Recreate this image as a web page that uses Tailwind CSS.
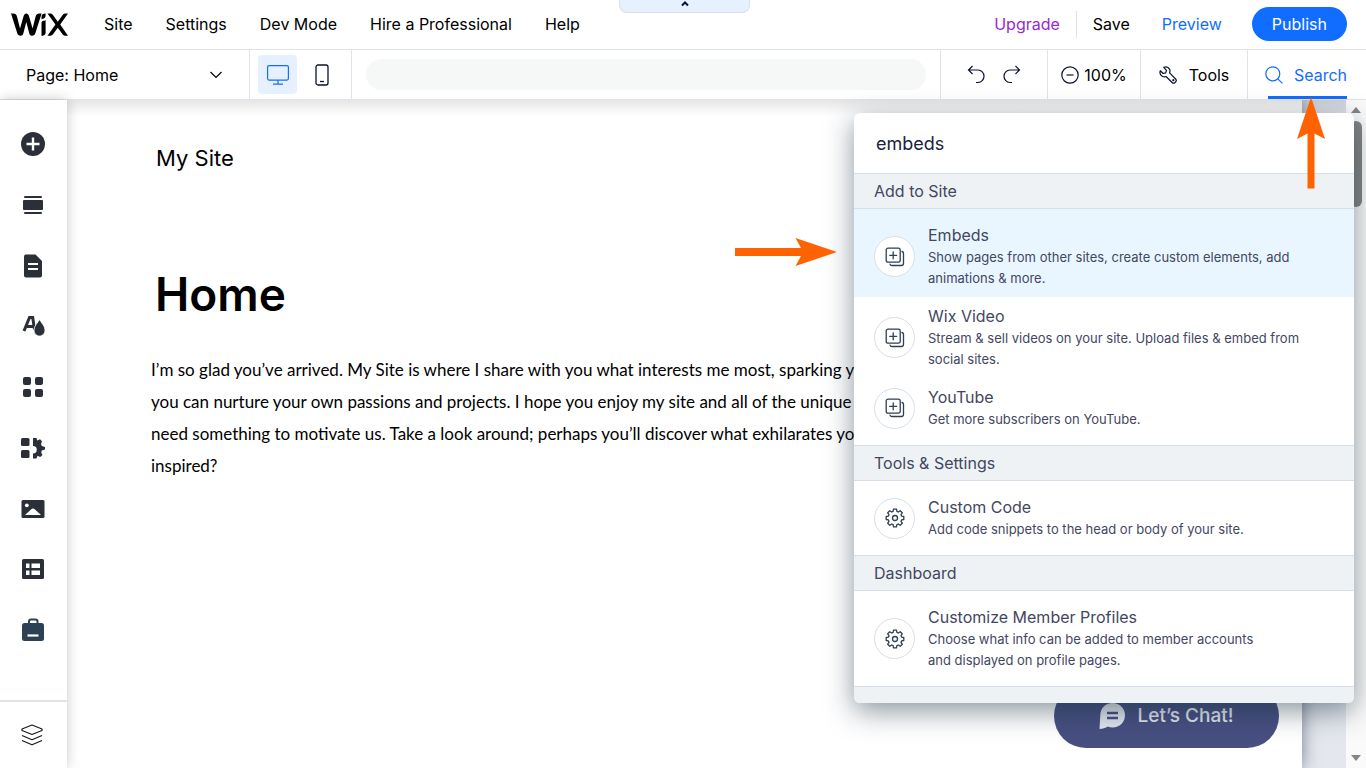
<!DOCTYPE html>
<html lang="en">
<head>
    <meta charset="UTF-8">
    <meta name="viewport" content="width=device-width, initial-scale=1.0">
    <title>Wix Editor</title>
    <script src="https://cdn.jsdelivr.net/npm/@tailwindcss/browser@4"></script>
</head>
<body class="h-screen overflow-hidden flex flex-col bg-white text-[#0b1230] text-base font-['Inter',sans-serif]">
    <!-- Shared icons -->
    <svg class="hidden">
        <symbol id="icon-add" viewBox="0 0 20 20" fill="none" stroke="currentColor" stroke-width="1.3" stroke-linecap="round">
            <rect x="1.2" y="1.2" width="14" height="14" rx="1.8"/>
            <path d="M8.2 4.8v7M4.7 8.3h7M17 4.5c.9.2 1.5.8 1.5 1.8v10c0 1.3-.8 2.2-2.200 2.200H7c-1 0-1.700-.5-2-1.400"/>
        </symbol>
        <symbol id="icon-gear" viewBox="0 0 20 20" fill="none" stroke="currentColor" stroke-width="1.3" stroke-linejoin="round">
            <path d="M8.500 1.200h3l.4 2.200 1.400.6 1.900-1.300 2.100 2.100-1.300 1.900.6 1.400 2.200.4v3l-2.200.4-.6 1.400 1.300 1.900-2.100 2.100-1.900-1.300-1.400.6-.4 2.200h-3l-.4-2.200-1.400-.6-1.900 1.300-2.100-2.100L4 13.300l-.6-1.400-2.200-.4v-3l2.200-.4L4 6.700 2.700 4.800l2.100-2.100L6.700 4l1.400-.6z"/>
            <circle cx="10" cy="10" r="2.500"/>
        </symbol>
    </svg>

    <!-- Top bar -->
    <header class="relative h-[50px] shrink-0 flex items-center justify-between border-b border-[#dfe3eb] pl-[11px] pr-[19px] pb-px">
        <div class="flex items-center">
            <a href="#" aria-label="Wix" class="mr-9">
                <svg class="w-[57px] h-[23px] text-black" viewBox="0 0 57 23" fill="currentColor">
                    <path d="M0 .5h2.200c2 0 3.300 1 3.800 3L9 15.500l3.200-11C12.800 2 13.800 .5 15.300 .5s2.500 1.500 3.100 4l3.200 11 3-12c.5-2 1.800-3 3.800-3h2.200L24.400 20c-.5 2-1.500 2.700-3.600 2.700-1.300 0-2-.7-2.500-2.200L15.300 9l-3 11.500c-.5 1.500-1.200 2.200-2.500 2.200-2.100 0-3.100-.7-3.600-2.700z"/>
                    <path d="M34.600 7v12c0 2.700-.9 3.700-4.100 3.700V10c0-1.800 1.400-2.300 2.600-2.300.7 0 1.200-.2 1.500-.7z"/>
                    <path d="M34.600.5v2c0 2-1.200 3-2.800 3.300-.8.200-1.300.6-1.300.6V4.200C30.500 1.500 32 .5 34.600.5z"/>
                    <path d="M36.500.5h2.200c1.700 0 2.700.6 3.600 2l4.500 6.300 4.500-6.300c.9-1.400 1.900-2 3.600-2H57l-7.800 11L57 22.700h-2.200c-1.700 0-2.700-.6-3.600-2l-4.400-6-4.400 6c-.9 1.400-1.900 2-3.600 2h-2.300l7.900-11.200z"/>
                </svg>
            </a>
            <nav class="flex gap-[33px] text-black">
                <a href="#">Site</a>
                <a href="#">Settings</a>
                <a href="#">Dev Mode</a>
                <a href="#">Hire a Professional</a>
                <a href="#">Help</a>
            </nav>
        </div>
        <div class="flex items-center">
            <a href="#" class="text-[#9a27d5]">Upgrade</a>
            <span class="mx-4 w-px h-[27px] bg-[#dfe3eb]"></span>
            <button type="button" class="text-black">Save</button>
            <button type="button" class="ml-8 text-[#116dff]">Preview</button>
            <button type="button" class="ml-[30px] h-[34px] px-5 rounded-full bg-[#116dff] text-white">Publish</button>
        </div>
        <button type="button" aria-label="Collapse top bar" class="absolute top-0 inset-x-0 ml-auto mr-[616px] w-[131px] h-[13px] flex justify-center rounded-b-lg border border-t-0 border-[#d5dfef] bg-[#e7f0ff]">
            <svg class="w-2 h-2" viewBox="0 0 8 8" fill="none" stroke="currentColor" stroke-width="2"><path d="M1 5.500l3-3 3 3"/></svg>
        </button>
    </header>

    <!-- Toolbar -->
    <div class="h-[50px] shrink-0 flex border-b border-[#dfe3eb] divide-x divide-[#dfe3eb] text-black">
        <button type="button" class="w-[250px] shrink-0 flex items-center justify-between pl-[26px] pr-[27px]">
            Page: Home
            <svg class="w-3 h-2" viewBox="0 0 12 8" fill="none" stroke="currentColor" stroke-width="1.200"><path d="M.5 1L6 6.500 11.500 1"/></svg>
        </button>
        <div class="w-[102px] shrink-0 flex items-center gap-[5px] pl-2">
            <button type="button" aria-label="Desktop" class="w-[39px] h-[39px] flex items-center justify-center rounded bg-[#e7f0ff] text-[#116dff]">
                <svg class="w-[22px] h-5" viewBox="0 0 22 20" fill="none" stroke="currentColor" stroke-width="1.200"><rect x=".6" y=".6" width="20.800" height="14.500" rx="1.500"/><path d="M11 15v4M6 19.200h10"/></svg>
            </button>
            <button type="button" aria-label="Mobile" class="w-[39px] h-[39px] flex items-center justify-center text-[#0b1230]">
                <svg class="w-[14px] h-[22px]" viewBox="0 0 14 22" fill="none" stroke="currentColor" stroke-width="1.300"><rect x="1" y="1" width="12" height="20" rx="2"/><path d="M5 17.500h4"/></svg>
            </button>
        </div>
        <div class="flex-1 flex items-center px-[14px]">
            <div class="flex-1 h-[31px] rounded-full bg-[#f6f8f8]"></div>
        </div>
        <div class="w-[107px] shrink-0 flex items-center justify-center gap-[18px] text-[#0b1230]">
            <button type="button" aria-label="Undo">
                <svg class="w-[18px] h-[19px]" viewBox="0 0 18 19" fill="none" stroke="currentColor" stroke-width="1.200"><path d="M5.500 1L1.500 5l4 4M1.500 5H11c3.400 0 6 2.800 6 6.200s-2.600 6.300-6 6.300H9"/></svg>
            </button>
            <button type="button" aria-label="Redo">
                <svg class="w-[18px] h-[19px]" viewBox="0 0 18 19" fill="none" stroke="currentColor" stroke-width="1.200"><path d="M12.500 1l4 4-4 4M16.500 5H7c-3.400 0-6 2.800-6 6.200s2.600 6.300 6 6.300h2"/></svg>
            </button>
        </div>
        <button type="button" class="w-[93px] shrink-0 flex items-center justify-center gap-[5px]">
            <svg class="w-[18px] h-[18px] shrink-0 text-[#0b1230]" viewBox="0 0 18 18" fill="none" stroke="currentColor" stroke-width="1.200"><circle cx="9" cy="9" r="8.200"/><path d="M5.500 9h7"/></svg>
            100%
        </button>
        <button type="button" class="w-[107px] shrink-0 flex items-center justify-center gap-3">
            <svg class="w-[18px] h-[18px] shrink-0 text-[#0b1230]" viewBox="0 0 18 18" fill="none" stroke="currentColor" stroke-width="1.200" stroke-linejoin="round"><path d="M4.800 1.300c2.200-.9 4.600-.2 5.700 1.800.6 1.200.6 2.500.1 3.700l6 6.200c.8.900.8 2.100 0 2.900l-.6.600c-.8.800-2.100.8-2.900 0L7 10.500c-1.200.5-2.600.4-3.800-.3C1.300 9.100.6 6.900 1.300 4.800l2.900 2.700 2.500-.6.700-2.600z"/><circle cx="14.300" cy="14.200" r=".5"/></svg>
            Tools
        </button>
        <div class="w-[118px] shrink-0 flex pl-[17px] pr-[19px]">
            <button type="button" class="relative flex-1 flex items-center justify-between text-[#116dff] after:absolute after:left-[3px] after:right-0 after:bottom-0 after:h-[3px] after:bg-[#116dff]">
                <svg class="w-[18px] h-[18px] shrink-0" viewBox="0 0 18 18" fill="none" stroke="currentColor" stroke-width="1.200"><circle cx="7.800" cy="7.800" r="7"/><path d="M12.800 12.800l4.600 4.600"/></svg>
                Search
            </button>
        </div>
    </div>

    <div class="flex-1 min-h-0 flex">
        <!-- Left sidebar -->
        <aside class="relative z-10 w-[67px] shrink-0 flex flex-col bg-white shadow-[0_0_12px_rgba(0,0,0,0.22)] text-[#2b2f38]">
            <div class="flex-1 flex flex-col items-center justify-between pt-8 pb-[58px] pr-[2px]">
                <button type="button" aria-label="Add elements">
                    <svg class="w-6 h-6" viewBox="0 0 24 24"><circle cx="12" cy="12" r="12" fill="currentColor"/><path d="M12 5.500v13M5.500 12h13" stroke="#fff" stroke-width="2.400"/></svg>
                </button>
                <button type="button" aria-label="Sections">
                    <svg class="w-6 h-6" viewBox="0 0 24 24" fill="currentColor"><rect x="3" y="3" width="18" height="2" rx="1"/><rect x="2" y="7" width="20" height="10" rx="1"/><rect x="3" y="19" width="18" height="2" rx="1"/></svg>
                </button>
                <button type="button" aria-label="Pages">
                    <svg class="w-6 h-6" viewBox="0 0 24 24"><path d="M5 .5h9.500L21 7v14.500c0 1.100-.9 2-2 2H5c-1.100 0-2-.9-2-2v-19c0-1.100.9-2 2-2z" fill="currentColor"/><path d="M7 10h10M7 15h10" stroke="#fff" stroke-width="2.200"/></svg>
                </button>
                <button type="button" aria-label="Site design">
                    <svg class="w-6 h-6" viewBox="0 0 24 24"><path d="M3 17L8.500 3.500h3.200l1.800 12M5.500 12.500h7" fill="none" stroke="currentColor" stroke-width="3"/><path d="M18.500 5.500c1.800 3.300 5.500 6.500 5.500 10.500 0 3.700-2.500 6-5.500 6S13 19.700 13 16c0-4 3.700-7.200 5.500-10.500z" fill="currentColor" stroke="#fff" stroke-width=".8"/></svg>
                </button>
                <button type="button" aria-label="App market">
                    <svg class="w-6 h-6" viewBox="0 0 24 24" fill="currentColor"><rect x="2" y="2" width="8" height="8" rx="2"/><rect x="14" y="2" width="8" height="8" rx="2"/><rect x="2" y="14" width="8" height="8" rx="2"/><rect x="14" y="14" width="8" height="8" rx="2"/></svg>
                </button>
                <button type="button" aria-label="My business">
                    <svg class="w-6 h-6" viewBox="0 0 24 24" fill="currentColor"><rect x="0" y="2" width="8.500" height="8" rx="1.500"/><rect x="0" y="14" width="8.500" height="8" rx="1.500"/><path d="M12 2h3.500l.8 2.500 2.700-1.300 2 2-1 2.800.8 2L24 11v2.500l-3.200 1-.6 2 1.300 2.500-2.300 2-2.700-1.200-1 2.700H12v-5a3.700 3.700 0 000-7.500z"/></svg>
                </button>
                <button type="button" aria-label="Media">
                    <svg class="w-6 h-6" viewBox="0 0 24 24"><rect x="0.500" y="3" width="23" height="18" rx="1.500" fill="currentColor"/><circle cx="5.800" cy="8.300" r="1.900" fill="#fff"/><path d="M4 18l6-5.500c1.300-1.200 2.700-1.200 4 0l6 5.500z" fill="#fff"/></svg>
                </button>
                <button type="button" aria-label="Content manager">
                    <svg class="w-6 h-6" viewBox="0 0 24 24"><rect x="1" y="2" width="22" height="20" rx="1.500" fill="currentColor"/><path d="M5 6.500h3.500V11H5zM10.500 6.500h8.500V11h-8.500zM5 13.500h3.500V18H5zM10.500 13.500h8.500V18h-8.500z" fill="#fff"/></svg>
                </button>
                <button type="button" aria-label="Ascend" class="text-[#2d4154]">
                    <svg class="w-6 h-6" viewBox="0 0 24 24"><path d="M8 6V3.500C8 2.200 8.700 1.500 10 1.500h4.500c1.300 0 2 .7 2 2V6" fill="none" stroke="currentColor" stroke-width="2"/><rect x="1" y="5" width="22" height="18" rx="2.500" fill="currentColor"/><path d="M6.500 17.500h11" stroke="#fff" stroke-width="2.200"/></svg>
                </button>
            </div>
            <button type="button" aria-label="Layers" class="h-[68px] flex items-center justify-center border-t-2 border-[#dfe3eb] pr-[3px] text-[#16181d]">
                <svg class="w-[22px] h-[22px]" viewBox="0 0 22 22" fill="none" stroke="currentColor" stroke-width="1.200" stroke-linejoin="round"><path d="M11 1L21 5v1.500L11 10.500 1 6.500V5zM1 11.500l10 4.200 10-4.200M1 16.500l10 4.300 10-4.300"/></svg>
            </button>
        </aside>

        <!-- Site canvas -->
        <div class="relative flex-1 min-w-0 flex bg-[#e4e7ee] overflow-hidden">
            <main class="relative flex-1 mr-[44px] bg-white pl-[84px] pt-11 text-black whitespace-nowrap shadow-[0_0_16px_rgba(30,40,60,0.55)]">
                <p class="pl-[5px] text-[22px] leading-7">My Site</p>
                <h1 class="mt-[92px] pl-1 text-[46px] leading-[60px] font-semibold">Home</h1>
                <p class="mt-[30px] text-[17px] leading-8 font-['Lato',sans-serif]">
                    I’m so glad you’ve arrived. My Site is where I share with you what interests me most, sparking your<br>
                    you can nurture your own passions and projects. I hope you enjoy my site and all of the unique content<br>
                    need something to motivate us. Take a look around; perhaps you’ll discover what exhilarates you<br>
                    inspired?
                </p>
                <button type="button" class="absolute right-[23px] bottom-5 w-[225px] h-16 flex items-center justify-center gap-3 rounded-full bg-[#474f80] text-[#e3e7ee] text-[19px] font-medium">
                    <svg class="w-[26px] h-[26px]" viewBox="0 0 26 26"><path d="M13.500 0C20.500 0 26 5.300 26 12.300S20.500 24.500 13.500 24.500c-1.700 0-3.200-.3-4.600-.9C6.500 25.300 3.500 26 .5 26l.8-13.700C1.300 5.300 6.500 0 13.500 0z" fill="currentColor"/><path d="M8 10h11M8 15h11" stroke="#474f80" stroke-width="2.400"/></svg>
                    Let’s Chat!
                </button>
            </main>
            <div class="absolute inset-x-0 top-0 h-4 bg-linear-to-b from-black/10 to-transparent"></div>
        </div>

        <!-- Scrollbar -->
        <div class="w-5 shrink-0 flex flex-col items-center justify-between bg-[#fafafa] pt-[7px] pb-[7px] text-[#858585]">
            <div class="flex flex-col items-center gap-2">
                <svg class="w-[10px] h-[6px]" viewBox="0 0 10 6" fill="currentColor"><path d="M5 0l5 6H0z"/></svg>
                <div class="w-3 h-[86px] rounded-full bg-[#858585]"></div>
            </div>
            <svg class="w-[10px] h-[6px]" viewBox="0 0 10 6" fill="currentColor"><path d="M0 0h10L5 6z"/></svg>
        </div>
    </div>

    <!-- Search results -->
    <section class="absolute z-20 right-3 top-[113px] w-[500px] h-[590px] flex flex-col rounded-md overflow-hidden bg-white text-[#43475f] shadow-[0_8px_28px_rgba(22,45,61,0.5)]">
        <input type="text" aria-label="Search" value="embeds" class="h-[60px] shrink-0 px-[22px] text-[18px] text-[#1b2140] outline-none">
        <h2 class="h-9 shrink-0 flex items-center border-y border-[#d6dfe8] bg-[#eef2f5] px-5 pb-px">Add to Site</h2>
        <ul>
            <li>
                <a href="#" class="flex items-center gap-[13px] px-5 pt-[15px] pb-2 bg-[#e9f6ff]">
                    <span class="size-[41px] shrink-0 flex items-center justify-center rounded-full border border-[#d6dfe8] bg-white text-[#2d3f50]"><svg class="size-5"><use href="#icon-add"/></svg></span>
                    <span>
                        <span class="block leading-[23px]">Embeds</span>
                        <span class="block text-[13px] leading-[21px]">Show pages from other sites, create custom elements, add<br>animations &amp; more.</span>
                    </span>
                </a>
            </li>
            <li>
                <a href="#" class="flex items-center gap-[13px] px-5 py-2">
                    <span class="size-[41px] shrink-0 flex items-center justify-center rounded-full border border-[#d6dfe8] bg-white text-[#2d3f50]"><svg class="size-5"><use href="#icon-add"/></svg></span>
                    <span>
                        <span class="block leading-[23px]">Wix Video</span>
                        <span class="block text-[13px] leading-[21px]">Stream &amp; sell videos on your site. Upload files &amp; embed from<br>social sites.</span>
                    </span>
                </a>
            </li>
            <li>
                <a href="#" class="flex items-center gap-[13px] px-5 pt-2 pb-[15px]">
                    <span class="size-[41px] shrink-0 flex items-center justify-center rounded-full border border-[#d6dfe8] bg-white text-[#2d3f50]"><svg class="size-5"><use href="#icon-add"/></svg></span>
                    <span>
                        <span class="block leading-[23px]">YouTube</span>
                        <span class="block text-[13px] leading-[21px]">Get more subscribers on YouTube.</span>
                    </span>
                </a>
            </li>
        </ul>
        <h2 class="h-9 shrink-0 flex items-center border-y border-[#d6dfe8] bg-[#eef2f5] px-5 pb-px">Tools &amp; Settings</h2>
        <a href="#" class="flex items-center gap-[13px] px-5 py-[15px]">
            <span class="size-[41px] shrink-0 flex items-center justify-center rounded-full border border-[#d6dfe8] bg-white text-[#2d3f50]"><svg class="size-5"><use href="#icon-gear"/></svg></span>
            <span>
                <span class="block leading-[23px]">Custom Code</span>
                <span class="block text-[13px] leading-[21px]">Add code snippets to the head or body of your site.</span>
            </span>
        </a>
        <h2 class="h-9 shrink-0 flex items-center border-y border-[#d6dfe8] bg-[#eef2f5] px-5 pb-px">Dashboard</h2>
        <a href="#" class="flex items-center gap-[13px] px-5 py-[15px]">
            <span class="size-[41px] shrink-0 flex items-center justify-center rounded-full border border-[#d6dfe8] bg-white text-[#2d3f50]"><svg class="size-5"><use href="#icon-gear"/></svg></span>
            <span>
                <span class="block leading-[23px]">Customize Member Profiles</span>
                <span class="block text-[13px] leading-[21px]">Choose what info can be added to member accounts<br>and displayed on profile pages.</span>
            </span>
        </a>
        <div class="flex-1 border-t border-[#d6dfe8] bg-[#eef2f5]"></div>
    </section>

    <!-- Pointer arrows -->
    <svg class="absolute z-30 right-[528px] top-[237px] w-[103px] h-[30px]" viewBox="0 0 103 30" fill="#ff6200"><path d="M0 11h66L60.500 1 102 15 60.500 29 66 19H0z"/></svg>
    <svg class="absolute z-30 right-[40px] top-[97px] w-[30px] h-[92px]" viewBox="0 0 30 92" fill="#ff6200"><path d="M15 0l14 42-10.500-5.500V91.500h-7v-55L1 42z"/></svg>
</body>
</html>
